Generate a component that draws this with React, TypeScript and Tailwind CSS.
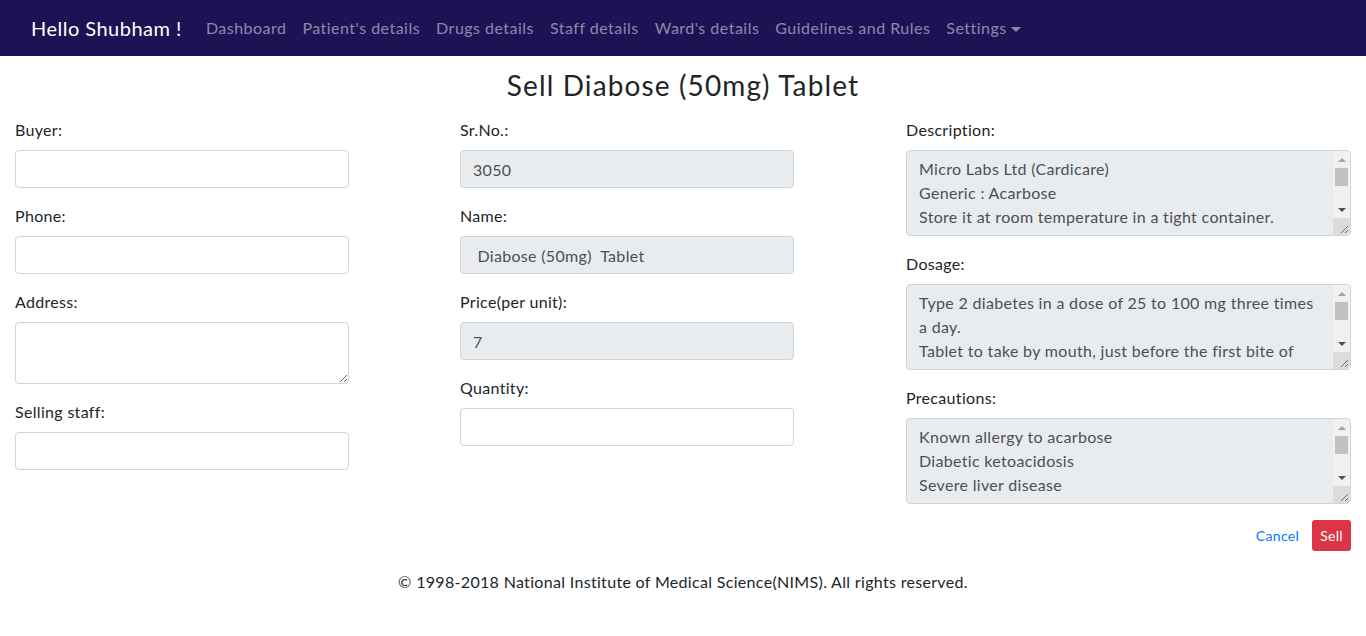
import React from 'react';

const navLinks = [
  "Dashboard",
  "Patient's details",
  'Drugs details',
  'Staff details',
  "Ward's details",
  'Guidelines and Rules',
];

const inputCls =
  'block w-full h-[38px] px-3 py-[6px] text-base text-[#495057] border border-[#ced4da] rounded-[4px] outline-none';
const labelCls = 'block mb-2 leading-6 text-[#212529]';

function Field({ label, children }: { label: string; children: React.ReactNode }) {
  return (
    <div className="mb-4">
      <label className={labelCls}>{label}</label>
      {children}
    </div>
  );
}

// read-only textarea with a drawn classic scrollbar (the browser hides real ones)
function InfoArea({ text }: { text: string }) {
  return (
    <div className="relative">
      <textarea
        readOnly
        rows={3}
        defaultValue={text}
        className="block w-full h-[86px] pl-3 pr-[29px] py-[6px] text-base leading-6 text-[#495057] bg-[#e9ecef] border border-[#ced4da] rounded-[4px] outline-none overflow-hidden resize-none"
      />
      <div className="absolute top-px right-px bottom-px w-[17px] flex flex-col bg-[#f1f1f1] rounded-tr-[3px]">
        <div className="h-[17px] flex items-center justify-center">
          <span className="w-0 h-0 border-x-[4px] border-x-transparent border-b-[4px] border-b-[#a3a3a3]" />
        </div>
        <div className="flex-1 px-[2px]">
          <div className="h-[18px] bg-[#c1c1c1]" />
        </div>
        <div className="h-[17px] flex items-center justify-center">
          <span className="w-0 h-0 border-x-[4px] border-x-transparent border-t-[4px] border-t-[#505050]" />
        </div>
        <div className="h-[17px] bg-[#dcdcdc] flex items-end justify-end rounded-br-[3px]">
          <svg width="8" height="8" viewBox="0 0 8 8" className="mr-[2px] mb-[2px]">
            <path d="M1 8 L8 1 M5 8 L8 5" stroke="#6b6b6b" strokeWidth="1" fill="none" />
          </svg>
        </div>
      </div>
    </div>
  );
}

export default function App() {
  return (
    <div className="min-h-screen bg-white font-['Lato','Open_Sans',sans-serif] tracking-[0.02em] text-base text-[#212529]">
      <nav className="h-14 bg-[#1c1254] flex items-center pl-[31px] pr-4 tracking-[0.03em]">
        <span className="text-white text-xl mr-4">Hello Shubham !</span>
        <ul className="flex items-center">
          {navLinks.map((l) => (
            <li key={l}>
              <a href="#" className="block px-2 py-2 text-white/50">
                {l}
              </a>
            </li>
          ))}
          <li>
            <a href="#" className="flex items-center px-2 py-2 text-white/50">
              Settings
              <span className="ml-[4px] mt-[2px] w-0 h-0 border-x-[5px] border-x-transparent border-t-[5px] border-t-white/50" />
            </a>
          </li>
        </ul>
      </nav>

      <h3 className="mt-[12px] text-center text-[28px] leading-[34px] tracking-[0.04em] text-[#212529]">
        Sell Diabose (50mg) Tablet
      </h3>

      <form className="mt-[16px] flex px-[15px]">
        <div className="w-[334px]">
          <Field label="Buyer:">
            <input className={inputCls} />
          </Field>
          <Field label="Phone:">
            <input className={inputCls} />
          </Field>
          <Field label="Address:">
            <textarea rows={2} className="block w-full h-[62px] px-3 py-[6px] text-base leading-6 border border-[#ced4da] rounded-[4px] outline-none" />
          </Field>
          <Field label="Selling staff:">
            <input className={inputCls} />
          </Field>
        </div>

        <div className="w-[334px] ml-[111px]">
          <Field label="Sr.No.:">
            <input readOnly value="3050" className={inputCls + ' bg-[#e9ecef]'} />
          </Field>
          <Field label="Name:">
            <input readOnly value=" Diabose (50mg)  Tablet" className={inputCls + ' bg-[#e9ecef]'} />
          </Field>
          <Field label="Price(per unit):">
            <input readOnly value="7" className={inputCls + ' bg-[#e9ecef]'} />
          </Field>
          <Field label="Quantity:">
            <input className={inputCls} />
          </Field>
        </div>

        <div className="w-[445px] ml-[112px]">
          <Field label="Description:">
            <InfoArea text={'Micro Labs Ltd (Cardicare)\nGeneric : Acarbose\nStore it at room temperature in a tight container.\nProtect from moisture.'} />
          </Field>
          <Field label="Dosage:">
            <InfoArea text={'Type 2 diabetes in a dose of 25 to 100 mg three times a day.\nTablet to take by mouth, just before the first bite of each meal.'} />
          </Field>
          <Field label="Precautions:">
            <InfoArea text={'Known allergy to acarbose\nDiabetic ketoacidosis\nSevere liver disease\nIntestinal conditions like inflammatory bowel disease\nKidney disease'} />
          </Field>
          <div className="flex justify-end items-center gap-[5px]">
            <button type="button" className="px-2 h-[31px] text-sm text-[#007bff]">
              Cancel
            </button>
            <button type="button" className="px-2 h-[31px] text-sm text-white bg-[#dc3545] rounded-[3px]">
              Sell
            </button>
          </div>
        </div>
      </form>

      <footer className="mt-[19px] text-center leading-6">
        © 1998-2018 National Institute of Medical Science(NIMS). All rights reserved.
      </footer>
    </div>
  );
}
